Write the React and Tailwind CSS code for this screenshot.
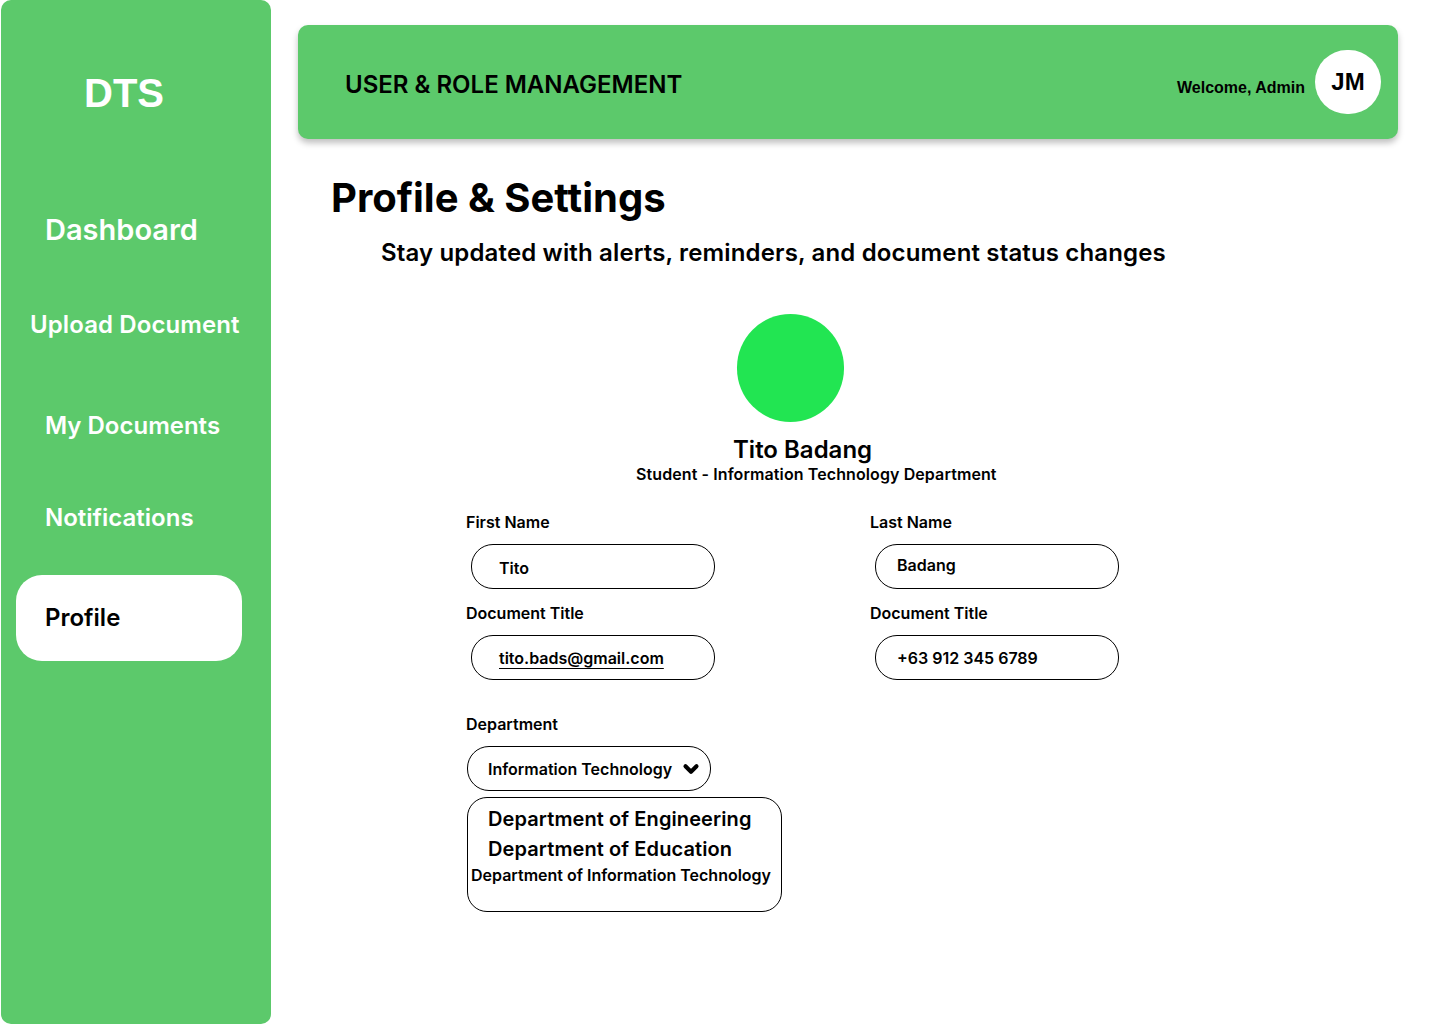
import { ChevronDown } from "lucide-react";

const INTER = { fontFamily: "Inter, 'Noto Sans', sans-serif" };

const NAV = [
  { label: "Dashboard", cls: "pl-[44px] pt-[98px] text-[29px]" },
  { label: "Upload Document", cls: "pl-[29px] pt-[63px] text-[24px] tracking-[0.1px]" },
  { label: "My Documents", cls: "pl-[44px] pt-[69px] text-[24px]" },
  { label: "Notifications", cls: "pl-[44px] pt-[60px] text-[24px]" },
];

function Field({ label, value, underline, valueCls = "" }) {
  return (
    <div className="flex flex-col">
      <span className="text-[16px] font-semibold leading-5 text-black">{label}</span>
      <div className="mt-[12px] ml-[5px] flex h-[45px] w-[244px] items-center rounded-[22px] border border-black px-[27px]">
        <span className={`text-[16px] font-semibold text-black ${underline ? "underline underline-offset-4" : ""} ${valueCls}`}>
          {value}
        </span>
      </div>
    </div>
  );
}

export default function App() {
  return (
    <div className="flex min-h-[1024px] w-[1440px] bg-white" style={INTER}>
      <aside className="ml-px flex h-[1024px] w-[270px] shrink-0 flex-col rounded-[10px] bg-[#5cc96b]">
        <div
          className="pt-[70px] text-center text-[40px] font-bold leading-[46px] text-white"
          style={{ fontFamily: "'Liberation Sans', Arial, sans-serif", paddingRight: 24 }}
        >
          DTS
        </div>
        {NAV.map((n) => (
          <div key={n.label} className={`${n.cls} font-semibold leading-8 text-white`}>
            {n.label}
          </div>
        ))}
        <div className="ml-[15px] mt-[41px] flex h-[86px] w-[226px] items-center rounded-[26px] bg-white pl-[29px]">
          <span className="text-[24px] font-semibold text-black">Profile</span>
        </div>
      </aside>

      <main className="flex flex-1 flex-col pl-[27px] pt-[25px]">
        <header className="flex h-[114px] w-[1100px] items-center justify-between rounded-[10px] bg-[#5cc96b] pl-[47px] pr-[17px] shadow-[0_4px_6px_rgba(0,0,0,0.25)]">
          <h1 className="mt-[6px] text-[24px] font-semibold tracking-[0px] text-black">USER &amp; ROLE MANAGEMENT</h1>
          <div className="flex items-center gap-[10px]" style={{ fontFamily: "'Liberation Sans', Arial, sans-serif" }}>
            <span className="mt-[12px] text-[16px] font-bold text-black">Welcome, Admin</span>
            <div className="flex h-[64px] w-[66px] items-center justify-center rounded-full bg-white">
              <span className="text-[24px] font-bold text-black">JM</span>
            </div>
          </div>
        </header>

        <h2 className="ml-[33px] mt-[35px] text-[40px] font-bold leading-[48px] text-black">Profile &amp; Settings</h2>
        <p className="ml-[83px] mt-[15px] text-[24px] font-semibold leading-8 tracking-[0.15px] text-black">
          Stay updated with alerts, reminders, and document status changes
        </p>

        <div className="ml-[439px] mt-[45px] h-[108px] w-[107px] rounded-full bg-[#22e552]" />
        <div className="ml-[435px] mt-[12px] text-[24px] font-semibold leading-8 text-black">Tito Badang</div>
        <div className="ml-[338px] mt-[-2px] text-[16px] font-semibold leading-5 tracking-[0.1px] text-black">
          Student - Information Technology Department
        </div>

        <div className="ml-[168px] mt-[28px] grid w-[650px] grid-cols-[404px_1fr] gap-y-[14px]">
          <Field label="First Name" value="Tito" valueCls="mt-[2px]" />
          <Field label="Last Name" value="Badang" valueCls="mt-[-4px] ml-[-6px]" />
          <Field label="Document Title" value="tito.bads@gmail.com" underline />
          <Field label="Document Title" value="+63 912 345 6789" valueCls="ml-[-6px]" />
        </div>

        <div className="ml-[168px] mt-[34px] flex flex-col">
          <span className="text-[16px] font-semibold leading-5 text-black">Department</span>
          <div className="mt-[12px] ml-px flex h-[45px] w-[244px] items-center rounded-[22px] border border-black pl-[20px] pr-[6px]">
            <span className="whitespace-nowrap text-[16px] font-semibold text-black">Information Technology</span>
            <ChevronDown className="ml-[8px] h-[22px] w-[22px] shrink-0 text-black" strokeWidth={4.5} />
          </div>
          <div className="ml-px mt-[6px] flex h-[115px] w-[315px] flex-col rounded-[20px] border border-black pt-[6px]">
            <span className="pl-[20px] text-[20px] font-semibold leading-[30px] tracking-[0.1px] text-black">Department of Engineering</span>
            <span className="pl-[20px] text-[20px] font-semibold leading-[30px] tracking-[0.1px] text-black">Department of Education</span>
            <span className="pl-[3px] pt-[1px] text-[16px] font-semibold leading-5 text-black">
              Department of Information Technology
            </span>
          </div>
        </div>
      </main>
    </div>
  );
}
